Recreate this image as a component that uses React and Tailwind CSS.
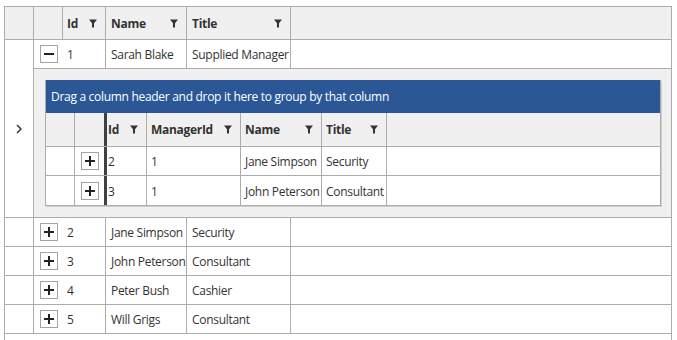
import React from "react";

const B = "border-[#acacac]";

function Filter() {
  return (
    <svg width="8" height="9" viewBox="0 0 8 9" className="shrink-0">
      <path d="M0 0.5 H8 L5 4.2 V8.5 H3 V4.2 Z" fill="#333" />
    </svg>
  );
}

function Toggle({ minus }) {
  return (
    <div className="w-[18px] h-[18px] border border-[#a4a4a4] bg-white flex items-center justify-center">
      <svg width="10" height="10" viewBox="0 0 10 10">
        <rect x="0" y="4" width="10" height="2" fill="#222" />
        {!minus && <rect x="4" y="0" width="2" height="10" fill="#222" />}
      </svg>
    </div>
  );
}

function HCell({ w, label, pl = "pl-[5px]", extra = "" }) {
  return (
    <div
      className={`${w} shrink-0 h-full border-r ${B} ${pl} pr-[8px] flex items-center justify-between font-bold ${extra}`}
    >
      <span className="pt-[1px]">{label}</span>
      <Filter />
    </div>
  );
}

function Cell({ w, children, pl = "pl-[5px]", extra = "" }) {
  return (
    <div
      className={`${w} shrink-0 h-full border-r ${B} ${pl} pt-[2px] flex items-center whitespace-nowrap overflow-hidden ${extra}`}
    >
      {children}
    </div>
  );
}

function OuterRow({ id, name, title, minus, first }) {
  return (
    <div className={`flex h-[29px] border-b ${B} bg-white`}>
      {!first && <div className={`w-[29px] shrink-0 h-full border-r ${B}`} />}
      <div className="w-[29px] shrink-0 h-full flex items-center justify-center">
        <Toggle minus={minus} />
      </div>
      <Cell w="w-[43px]" pl="pl-[4px]">{id}</Cell>
      <Cell w="w-[81px]">{name}</Cell>
      <Cell w="w-[104px]">{title}</Cell>
      <div className="flex-1" />
    </div>
  );
}

function InnerRow({ id, mid, name, title, last }) {
  return (
    <div className={`flex h-[29px] bg-white ${last ? "" : `border-b ${B}`}`}>
      <div className={`w-[29px] shrink-0 h-full border-r ${B}`} />
      <div className="w-[32px] shrink-0 h-full border-r-[3px] border-r-[#404040] flex items-center justify-center pl-[1px]">
        <Toggle />
      </div>
      <Cell w="w-[40px]" pl="pl-[1px]">{id}</Cell>
      <Cell w="w-[94px]" pl="pl-[4px]">{mid}</Cell>
      <Cell w="w-[81px]" pl="pl-[4px]">{name}</Cell>
      <Cell w="w-[65px]" pl="pl-[4px]">{title}</Cell>
      <div className="flex-1" />
    </div>
  );
}

export default function App() {
  return (
    <div
      className="w-[677px] h-[340px] overflow-hidden bg-white text-[12px] tracking-[-0.3px] text-[#333] pt-[6px] pl-[4px]"
      style={{ fontFamily: '"Open Sans", "Noto Sans", sans-serif' }}
    >
      <div className={`w-[668px] border ${B}`}>
        {/* header */}
        <div className={`flex h-[33px] border-b ${B} bg-[#f0f0f0]`}>
          <div className={`w-[29px] shrink-0 h-full border-r ${B}`} />
          <div className={`w-[29px] shrink-0 h-full border-r ${B}`} />
          <HCell w="w-[43px]" label="Id" pl="pl-[4px]" />
          <HCell w="w-[81px]" label="Name" />
          <HCell w="w-[104px]" label="Title" />
          <div className="flex-1" />
        </div>

        {/* expanded row + detail */}
        <div className="flex">
          <div className={`w-[29px] shrink-0 border-r border-b ${B} bg-white flex items-center justify-center`}>
            <svg width="6" height="10" viewBox="0 0 6 10">
              <path d="M1 1 L5 5 L1 9" fill="none" stroke="#333" strokeWidth="1.5" />
            </svg>
          </div>
          <div className="flex-1 min-w-0">
            <OuterRow id="1" name="Sarah Blake" title="Supplied Manager" minus first />
            <div className={`bg-[#f0f0f0] border-b ${B} pl-[11px] pr-[10px] pt-[11px] pb-[11px]`}>
              <div className={`border-l border-r border-b ${B} shadow-[1px_1px_0_#cfcfcf]`}>
                <div className="h-[33px] bg-[#2b5797] text-white flex items-center pl-[5px] pt-[1px] whitespace-nowrap">
                  Drag a column header and drop it here to group by that column
                </div>
                <div className={`flex h-[34px] border-b ${B} bg-[#f0f0f0]`}>
                  <div className={`w-[29px] shrink-0 h-full border-r ${B}`} />
                  <div className="w-[32px] shrink-0 h-full border-r-[3px] border-r-[#404040]" />
                  <HCell w="w-[40px]" label="Id" pl="pl-[1px]" />
                  <HCell w="w-[94px]" label="ManagerId" pl="pl-[4px]" />
                  <HCell w="w-[81px]" label="Name" pl="pl-[4px]" />
                  <HCell w="w-[65px]" label="Title" pl="pl-[4px]" />
                  <div className="flex-1" />
                </div>
                <InnerRow id="2" mid="1" name="Jane Simpson" title="Security" />
                <InnerRow id="3" mid="1" name="John Peterson" title="Consultant" last />
              </div>
            </div>
          </div>
        </div>

        <OuterRow id="2" name="Jane Simpson" title="Security" />
        <OuterRow id="3" name="John Peterson" title="Consultant" />
        <OuterRow id="4" name="Peter Bush" title="Cashier" />
        <OuterRow id="5" name="Will Grigs" title="Consultant" />
        <div className="h-[30px]" />
      </div>
    </div>
  );
}
